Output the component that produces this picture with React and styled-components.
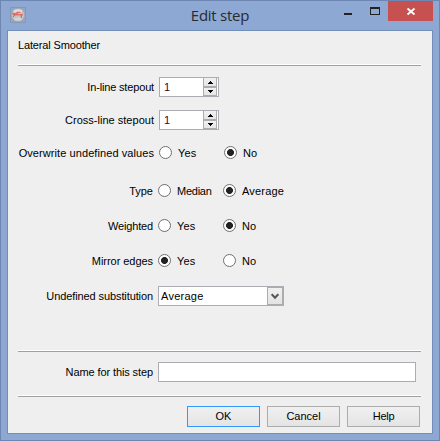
import React from "react";
import styled, { createGlobalStyle } from "styled-components";

const Global = createGlobalStyle`
  * { box-sizing: border-box; }
  body { margin: 0; overflow: hidden; }
  button, input { font: inherit; color: inherit; padding: 0; margin: 0; border-radius: 0; outline: none; }
`;

const Window = styled.div`
  width: 440px;
  height: 441px;
  display: flex;
  flex-direction: column;
  background: #8ca8d3;
  border: 1px solid #6e86b2;
  padding: 0 6px 6px;
  font: 11px/13px "Liberation Sans", Arial, sans-serif;
  color: #000;
`;

const TitleBar = styled.header`
  height: 29px;
  flex: none;
  display: grid;
  grid-template-columns: 105px 1fr 105px;
  align-items: start;
`;

const AppIcon = styled.svg`
  margin: 6px 0 0 3px;
  display: block;
`;

const Title = styled.h1`
  margin: 4px 0 0;
  font: 15px/20px "Open Sans", "Noto Sans", sans-serif;
  letter-spacing: ${(p) => p.$spacing}px;
  text-align: center;
  color: #292a2e;
`;

const WindowButtons = styled.div`
  display: flex;
  justify-content: flex-end;
`;

const WindowButton = styled.button`
  width: ${(p) => (p.$close ? 45 : 27)}px;
  height: 20px;
  border: 0;
  background: ${(p) => (p.$close ? "#c75050" : "transparent")};
  svg { display: block; }
`;

const Panel = styled.main`
  flex: 1;
  display: flex;
  flex-direction: column;
  background: #efefef;
  border: 1px solid #718fb9;
  padding: 8px 11px 5px 10px;
`;

const Heading = styled.div`
  height: 13px;
  letter-spacing: ${(p) => p.$spacing}px;
`;

const Rule = styled.hr`
  width: 100%;
  height: 2px;
  flex: none;
  border: 0;
  border-top: 1px solid #fff;
  border-bottom: 1px solid #a0a0a0;
  margin: ${(p) => p.$top}px 0 0;
`;

const Row = styled.div`
  display: flex;
  align-items: center;
  height: ${(p) => p.$height ?? 20}px;
  flex: none;
  margin-top: ${(p) => p.$top}px;
`;

const Label = styled.span`
  width: ${(p) => (p.$wide ? 136 : 135)}px;
  margin-right: 5px;
  padding-top: ${(p) => p.$drop ?? 0}px;
  text-align: right;
  white-space: nowrap;
  letter-spacing: ${(p) => p.$spacing ?? -0.1}px;
`;

const Spinner = styled.div`
  width: 60px;
  height: 20px;
  display: flex;
  border: 1px solid #abadb3;
  background: #fff;
`;

const SpinnerInput = styled.input`
  width: 43px;
  border: 0;
  padding-left: 4px;
  background: #fff;
  color: #400040;
`;

const SpinnerButtons = styled.div`
  width: 15px;
  display: flex;
  flex-direction: column;
`;

const SpinnerButton = styled.button`
  width: 14px;
  height: 9px;
  display: flex;
  align-items: center;
  justify-content: center;
  border: 1px solid #acacac;
  border-top-width: ${(p) => (p.$down ? 1 : 0)}px;
  background: linear-gradient(#f1f1f1, #e5e5e5);
`;

const Choice = styled.label`
  display: flex;
  align-items: center;
  width: 65px;
  white-space: nowrap;
  letter-spacing: ${(p) => p.$spacing}px;
`;

const ChoiceText = styled.span`
  padding-top: 2px;
`;

const Dot = styled.span`
  width: 13px;
  height: 13px;
  flex: none;
  margin-right: 6px;
  border: 1px solid #707070;
  border-radius: 50%;
  background: ${(p) => (p.$on ? "radial-gradient(circle, #222 3.1px, #fff 3.8px)" : "#fff")};
`;

const Select = styled.div`
  width: 126px;
  height: 20px;
  display: flex;
  align-items: stretch;
  border: 1px solid #abadb3;
  background: #fff;
`;

const SelectValue = styled.span`
  flex: 1;
  padding: 3px 0 0 2px;
  letter-spacing: ${(p) => p.$spacing}px;
`;

const SelectButton = styled.button`
  width: 16px;
  border: 1px solid #acacac;
  background: linear-gradient(#f0f0f0, #e3e3e3);
  svg { display: block; margin: 0 auto; }
`;

const NameInput = styled.input`
  width: 258px;
  height: 20px;
  border: 1px solid #abadb3;
  background: #fff;
`;

const Actions = styled.footer`
  display: flex;
  justify-content: flex-end;
  gap: 7px;
  margin: 9px 1px 0 0;
`;

const ActionButton = styled.button`
  width: 73px;
  height: 21px;
  border: 1px solid ${(p) => (p.$primary ? "#3399ff" : "#acacac")};
  background: linear-gradient(#f0f0f0, #e4e4e4);
  letter-spacing: ${(p) => p.$spacing ?? 0}px;
`;

function NumberField() {
  return (
    <Spinner>
      <SpinnerInput defaultValue="1" />
      <SpinnerButtons>
        <SpinnerButton aria-label="Increase">
          <svg width="5" height="3" viewBox="0 0 5 3" shapeRendering="crispEdges"><path d="M2 0h1v1h1v1h1v1H0V2h1V1h1z" /></svg>
        </SpinnerButton>
        <SpinnerButton $down aria-label="Decrease">
          <svg width="5" height="3" viewBox="0 0 5 3" shapeRendering="crispEdges"><path d="M0 0h5v1H4v1H3v1H2V2H1V1H0z" /></svg>
        </SpinnerButton>
      </SpinnerButtons>
    </Spinner>
  );
}

function RadioRow({ label, spacing, top, wide, options, selected }) {
  return (
    <Row $top={top} $height={21}>
      <Label $wide={wide} $spacing={spacing} $drop={2}>{label}</Label>
      {options.map(([text, s]) => (
        <Choice key={text} $spacing={s}>
          <Dot $on={text === selected} />
          <ChoiceText>{text}</ChoiceText>
        </Choice>
      ))}
    </Row>
  );
}

export default function App() {
  return (
    <>
      <Global />
      <Window>
        <TitleBar>
          <AppIcon width="16" height="16" viewBox="0 0 16 16">
            <rect x=".5" y=".5" width="15" height="15" fill="#93a6c8" stroke="#8498bb" />
            <circle cx="8" cy="8" r="6.6" fill="#c6c3c2" stroke="#aaa8aa" />
            <ellipse cx="8" cy="4" rx="4.5" ry="1.8" fill="#dedcda" />
            <ellipse cx="8" cy="12" rx="4" ry="1.6" fill="#d6d4d2" />
            <path d="M2 6.8h3.5L7 5.3h3.5M3 7.8h10M4.8 8L3 10M11.3 8v3M7 5.5v2.3" fill="none" stroke="#e2484a" strokeWidth=".9" />
          </AppIcon>
          <Title $spacing={-0.25}>Edit step</Title>
          <WindowButtons>
            <WindowButton aria-label="Minimize">
              <svg width="27" height="20"><path d="M10 12h8v2h-8z" fill="#222" /></svg>
            </WindowButton>
            <WindowButton aria-label="Maximize">
              <svg width="27" height="20"><path fillRule="evenodd" d="M9 6h10v8H9zM10 8v5h8V8z" fill="#222" /></svg>
            </WindowButton>
            <WindowButton $close aria-label="Close">
              <svg width="45" height="20"><path d="M19.5 7.5l7 6M26.5 7.5l-7 6" stroke="#fff" strokeWidth="1.8" /></svg>
            </WindowButton>
          </WindowButtons>
        </TitleBar>
        <Panel>
          <Heading $spacing={-0.15}>Lateral Smoother</Heading>
          <Rule $top={12} />
          <Row $top={11}><Label $wide $spacing={-0.16}>In-line stepout</Label><NumberField /></Row>
          <Row $top={13}><Label $wide $spacing={0.02}>Cross-line stepout</Label><NumberField /></Row>
          <RadioRow top={12} wide spacing={0.08} label="Overwrite undefined values" options={[["Yes", 0.1], ["No", 0]]} selected="No" />
          <RadioRow top={17} spacing={0} label="Type" options={[["Median", -0.25], ["Average", 0.2]]} selected="Average" />
          <RadioRow top={14} spacing={-0.15} label="Weighted" options={[["Yes", 0.1], ["No", 0]]} selected="No" />
          <RadioRow top={14} spacing={-0.05} label="Mirror edges" options={[["Yes", 0.1], ["No", 0]]} selected="Yes" />
          <Row $top={15}>
            <Label>Undefined substitution</Label>
            <Select>
              <SelectValue $spacing={0.25}>Average</SelectValue>
              <SelectButton aria-label="Open list">
                <svg width="8" height="7" viewBox="0 0 8 7"><path d="M.7 1.2L4 4.7l3.3-3.5" fill="none" stroke="#555" strokeWidth="2" /></svg>
              </SelectButton>
            </Select>
          </Row>
          <Rule $top={44} />
          <Row $top={10}><Label>Name for this step</Label><NameInput /></Row>
          <Rule $top={13} />
          <Actions>
            <ActionButton $primary>OK</ActionButton>
            <ActionButton>Cancel</ActionButton>
            <ActionButton $spacing={-0.3}>Help</ActionButton>
          </Actions>
        </Panel>
      </Window>
    </>
  );
}
